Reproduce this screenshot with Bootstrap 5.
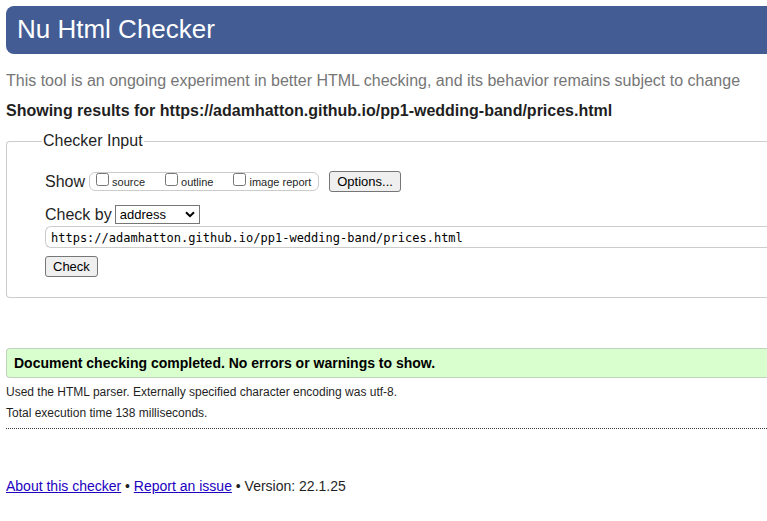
<!DOCTYPE html>
<html lang="en">
<head>
<meta charset="utf-8">
<meta name="viewport" content="width=device-width, initial-scale=1">
<title>Nu Html Checker</title>
<link href="https://cdn.jsdelivr.net/npm/bootstrap@5.3.0/dist/css/bootstrap.min.css" rel="stylesheet">
<style>
body { font-family: "Liberation Sans", Arial, sans-serif; font-size: 16px; line-height: 24px; color: #1f1f1f; background: #fff; padding: 6px 0 0 6px; }
.banner { background: #435c94; border-radius: 8px 0 0 8px; padding: 6px 11px 8px; }
.banner h1 { font-size: 26px; line-height: 34px; font-weight: 400; }
.intro { color: #767676; margin: 15px 0 6px; }
.results-for { font-size: 16px; line-height: 24px; font-weight: 700; margin: 0; }
.checker { border: 1px solid #ccc; border-right: 0; border-radius: 4px 0 0 4px; margin-top: 6px; padding: 18px 0 19px 38px; }
.checker legend { float: none; width: auto; margin: 0 0 0 -3px; padding: 0 1px; font-size: 16px; line-height: 24px; }
.line { min-height: 21px; line-height: 20px; }
.show-group { border: 1px solid #ccc; border-radius: 6px; height: 19px; padding: 0 7px 0 6px; gap: 20px; font-size: 11px; line-height: 18px; }
.show-group label { display: flex; gap: 3px; }
.show-group input { width: 13px; height: 13px; margin: 0; }
.push { background: #efefef; border: 1px solid #767676; border-radius: 3px; color: #000; font-size: 13px; line-height: 19px; padding: 0 7px; }
.options { margin-left: 10px; }
.check-by { gap: 3px; margin-top: 12px; margin-bottom: 1px; }
.by { appearance: none; width: 85px; height: 19px; border: 1px solid #767676; border-radius: 0; padding: 0 4px; font-size: 13px; line-height: 17px; color: #000; background: #fff url("data:image/svg+xml,%3Csvg xmlns='http://www.w3.org/2000/svg' viewBox='0 0 10 7'%3E%3Cpath d='M1 1.2l4 4 4-4' fill='none' stroke='%23000' stroke-width='2'/%3E%3C/svg%3E") no-repeat right 4px center / 10px 7px; }
.doc { display: block; border: 1px solid #ccc; border-right: 0; border-radius: 6px 0 0 6px; height: 22px; padding: 1px 5px 0; font: 12px "DejaVu Sans Mono", monospace; color: #000; }
.success-msg { background: #d9ffcf; border: 1px solid #c0d0bc; border-right: 0; border-radius: 4px 0 0 4px; color: #000; font-size: 14px; line-height: 20px; font-weight: 700; margin: 50px 0 4px; padding: 4px 7px; }
.details { font-size: 12px; line-height: 21px; border-bottom: 1px dotted #333; padding-bottom: 4px; }
.about { font-size: 14px; line-height: 20px; margin-top: 47px; }
.about a { color: #2200c1; }
</style>
<script defer src="https://cdn.jsdelivr.net/npm/bootstrap@5.3.0/dist/js/bootstrap.bundle.min.js"></script>
</head>
<body>
<header class="banner text-white"><h1 class="m-0">Nu Html Checker</h1></header>
<main>
  <p class="intro">This tool is an ongoing experiment in better HTML checking, and its behavior remains subject to change</p>
  <h2 class="results-for">Showing results for https://adamhatton.github.io/pp1-wedding-band/prices.html</h2>
  <form>
    <fieldset class="checker">
      <legend>Checker Input</legend>
      <div class="line d-flex align-items-center">
        <span class="me-1">Show</span>
        <div class="show-group d-flex">
          <label><input type="checkbox">source</label>
          <label><input type="checkbox">outline</label>
          <label><input type="checkbox">image report</label>
        </div>
        <button type="button" class="push options">Options...</button>
      </div>
      <div class="line check-by d-flex align-items-center">
        <label for="by">Check by</label>
        <select id="by" class="by"><option>address</option><option>file upload</option><option>text input</option></select>
      </div>
      <input class="doc w-100" type="url" aria-label="Address" value="https://adamhatton.github.io/pp1-wedding-band/prices.html">
      <button type="button" class="push mt-2">Check</button>
    </fieldset>
  </form>
  <p class="success-msg">Document checking completed. No errors or warnings to show.</p>
  <div class="details">
    <p class="m-0">Used the HTML parser. Externally specified character encoding was utf-8.</p>
    <p class="m-0">Total execution time 138 milliseconds.</p>
  </div>
</main>
<footer class="about"><a href="#about">About this checker</a> • <a href="#issue">Report an issue</a> • Version: 22.1.25</footer>
</body>
</html>
